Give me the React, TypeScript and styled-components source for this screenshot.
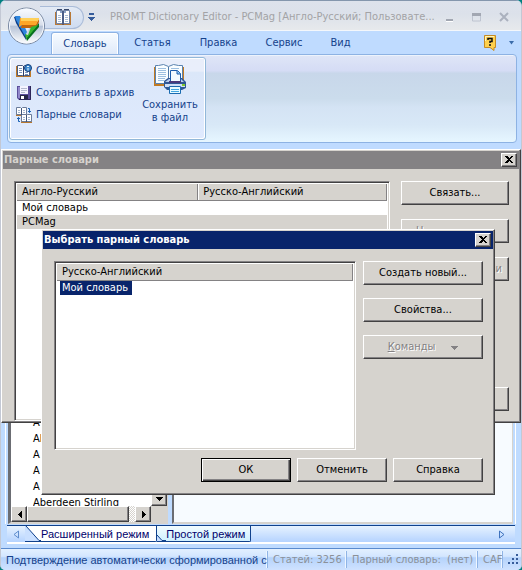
import React from "react";
import styled, { createGlobalStyle, css } from "styled-components";

const GlobalStyle = createGlobalStyle`
  * { box-sizing: border-box; }
  body { margin: 0; background: #008080; }
  body, button { font: 11px/14px "DejaVu Sans Condensed", "DejaVu Sans", sans-serif; }
  button { margin: 0; padding: 0; border: 0; background: none; color: inherit; }
  svg { display: block; flex: none; }
`;

const navy = "#15428b";
const face = "#d6d3ce";
const narrowFont = css`
  font-family: "Liberation Sans", Arial, sans-serif;
`;

const Shell = styled.div`
  position: relative;
  display: flex;
  flex-direction: column;
  min-height: 100vh;
  overflow: hidden;
  border: solid #c3c8d4;
  border-width: 0 1px;
  border-radius: 6px 6px 5px 5px;
  background: #bfdbff;
  color: ${navy};
`;

const TitleBar = styled.header`
  display: flex;
  align-items: center;
  height: 31px;
  padding: 3px 11px 0 39px;
  border-top: 1px solid #8496ad;
  border-bottom: 1px solid #f4f7fb;
  background: linear-gradient(#dde2ec, #dce1ea 45%, #e7e9ec);
`;

const Orb = styled.button`
  position: absolute;
  z-index: 1;
  left: 6px;
  top: 7px;
`;

const QuickBar = styled.div`
  display: flex;
  align-items: center;
  justify-content: flex-end;
  width: 44px;
  height: 23px;
  padding-right: 11px;
  border: 1px solid #a9bbd8;
  border-left: 0;
  border-radius: 0 12px 12px 0;
  background: linear-gradient(#e3eaf5, #cfdcf0);
`;

const More = styled.button`
  margin: 0 15px 0 4px;
`;

const WindowTitle = styled.h1`
  flex: 1;
  min-width: 0;
  margin: 0;
  overflow: hidden;
  white-space: nowrap;
  font: inherit;
  color: #a3a3a6;
`;

const Captions = styled.div`
  display: flex;
  gap: 17px;
`;

const TabRow = styled.nav`
  display: flex;
  align-items: flex-end;
  height: 23px;
  padding: 0 7px 0 50px;
`;

const RibbonTab = styled.button<{ $active?: boolean; $width: number }>`
  width: ${(p) => p.$width}px;
  height: 22px;
  color: ${navy};
  ${(p) =>
    p.$active &&
    css`
      border: 1px solid #8db2e3;
      border-bottom: 0;
      border-radius: 3px 3px 0 0;
      background: linear-gradient(#f7fbff, #dfeafa);
      box-shadow: inset 1px 1px #fff, inset -1px 0 #fff;
    `}
`;

const TabTools = styled.div`
  display: flex;
  align-items: center;
  gap: 12px;
  margin-left: auto;
  height: 23px;
`;

const Ribbon = styled.section`
  height: 89px;
  margin: 0 4px 0 6px;
  padding: 2px 1px;
  border: 1px solid #8db2e3;
  border-radius: 4px;
  background: linear-gradient(#dfe6f7, #d5dcf5 18%, #c8d7ea 21%, #cbdcec 50%, #d4e3f4 60%, #d8e8f7 80%, #e6f6ff);
  box-shadow: inset 1px 1px #edf3fc;
`;

const Group = styled.div`
  display: flex;
  width: 197px;
  height: 83px;
  padding: 2px 3px;
  border: 1px solid #92b8d9;
  border-radius: 3px;
  background: linear-gradient(#e9eefa, #e9eefb 16%, #dbe7f9 18%, #dfeafe);
  box-shadow: inset 1px 1px #fff, inset -1px -1px #fff;
`;

const CommandList = styled.div`
  display: flex;
  flex: 1;
  flex-direction: column;
`;

const Command = styled.button`
  display: flex;
  align-items: center;
  gap: 4px;
  height: 22px;
  padding-left: 3px;
  white-space: nowrap;
`;

const BigCommand = styled.button`
  display: flex;
  flex-direction: column;
  align-items: center;
  width: 64px;
  padding-top: 4px;
  gap: 1px;
  line-height: 13px;
`;

const Workspace = styled.main`
  display: grid;
  grid-template-columns: 160px 1fr;
  gap: 4px;
  flex: 1;
  min-height: 0;
  margin: 6px 5px 0 4px;
  padding: 0 2px;
  border: solid #fff;
  border-width: 0 1px;
`;

const EntryPane = styled.section`
  display: grid;
  grid-template-columns: 1fr 16px;
  grid-template-rows: 1fr 16px;
  border: solid;
  border-width: 0 1px 2px 3px;
  border-color: ${face} ${face} ${face} #6b6d73;
  background: ${face};
`;

const Entries = styled.ul`
  display: flex;
  flex-direction: column;
  justify-content: flex-end;
  margin: 0;
  padding: 0 0 0 22px;
  overflow: hidden;
  list-style: none;
  background: #fff;
  color: #000;
`;

const Entry = styled.li`
  height: 16px;
  line-height: 17px;
  white-space: nowrap;
  &:last-child { height: 12px; overflow: hidden; }
`;

const raised = css`
  border: 1px solid;
  border-color: #fff #424142 #424142 #fff;
  background: ${face};
  box-shadow: inset -1px -1px #848284;
`;

const VerticalBar = styled.div`
  display: flex;
  align-items: flex-end;
  background: #ebe9e6;
`;

const HorizontalBar = styled.div`
  display: flex;
  background: repeating-conic-gradient(#fff 0 25%, ${face} 0 50%) 0 0 / 2px 2px;
`;

const ScrollButton = styled.button`
  ${raised}
  display: grid;
  place-items: center;
  width: 16px;
  height: 16px;
`;

const Thumb = styled.div`
  ${raised}
  flex: 1;
  margin-right: 6px;
`;

const CardPane = styled.section`
  border: solid ${face};
  border-width: 0 1px 2px 2px;
  border-left-color: #6b6d73;
  background: #f7fbff;
`;

const ModeBar = styled.div`
  display: flex;
  align-items: flex-start;
  height: 19px;
  margin: 1px 6px 0;
  border-top: 1px solid #10418c;
  border-bottom: 2px solid #fff;
  background: linear-gradient(#e6f2ff, #b5d3ff);
`;

const ModeTab = styled.button<{ $active?: boolean }>`
  display: flex;
  height: 16px;
  padding-right: ${(p) => (p.$active ? 7 : 5)}px;
  border: solid #10418c;
  border-width: 0 1px 1px 0;
  border-radius: 0 0 2px 0;
  background: ${(p) => (p.$active ? "#fff" : "linear-gradient(#f2fcff, #cfefff)")};
  ${narrowFont}
  line-height: 17px;
  color: #00006b;
  white-space: nowrap;
`;

const ModeArrow = styled.button<{ $end?: boolean }>`
  display: grid;
  place-items: center;
  width: 18px;
  height: 16px;
  margin-left: ${(p) => (p.$end ? "auto" : "0")};
  margin-right: ${(p) => (p.$end ? "4px" : "0")};
`;

const Status = styled.footer`
  display: flex;
  align-items: center;
  height: 22px;
  margin-top: 4px;
  padding: 0 2px 1px 0;
  border-top: 1px solid #5a8ace;
  background: linear-gradient(#e3f0ff, #d3e6ff 35%, #b5d3fb 42%, #cfe2ff);
  white-space: nowrap;
`;

const StatusCell = styled.div<{ $width?: number; $muted?: boolean }>`
  flex: ${(p) => (p.$width ? "none" : "1")};
  width: ${(p) => (p.$width ? `${p.$width}px` : "auto")};
  min-width: 0;
  height: 17px;
  padding-left: 5px;
  overflow: hidden;
  ${(p) => !p.$muted && narrowFont}
  line-height: 18px;
  white-space: pre;
  color: ${(p) => (p.$muted ? "#8b9199" : navy)};
  border-right: 1px solid #8fb4e6;
  box-shadow: inset -1px 0 #eef6ff;
`;

const Dialog = styled.section<{ $front?: boolean }>`
  ${raised}
  position: absolute;
  top: ${(p) => (p.$front ? 229 : 149)}px;
  left: ${(p) => (p.$front ? 40 : 0)}px;
  right: ${(p) => (p.$front ? 26 : 0)}px;
  display: flex;
  flex-direction: column;
  height: ${(p) => (p.$front ? 266 : 274)}px;
  padding: 1px;
  color: #000;
`;

const Caption = styled.header<{ $active?: boolean }>`
  display: flex;
  align-items: center;
  justify-content: space-between;
  height: 18px;
  padding: 0 2px 0 1px;
  background: ${(p) => (p.$active ? "#08246b" : "#848284")};
  color: ${(p) => (p.$active ? "#fff" : face)};
`;

const CaptionText = styled.h2`
  margin: 0;
  font: inherit;
  font-weight: bold;
`;

const CloseButton = styled.button`
  ${raised}
  display: grid;
  place-items: center;
  width: 16px;
  height: 14px;
`;

const DialogBody = styled.div<{ $side: number; $gap: number }>`
  display: grid;
  grid-template-columns: 1fr ${(p) => p.$side}px;
  gap: ${(p) => p.$gap}px;
  flex: 1;
  padding: 12px 10px 0 11px;
`;

const Table = styled.table`
  width: 100%;
  border-collapse: separate;
  border-spacing: 0;
  table-layout: fixed;
`;

const TableFrame = styled.div`
  border: 1px solid;
  border-color: #848284 #fff #fff #848284;
  box-shadow: inset 1px 1px #424142, inset -1px -1px ${face};
  padding: 2px;
  background: #fff;
`;

const HeadCell = styled.th<{ $share?: number }>`
  width: ${(p) => (p.$share ? `${p.$share}%` : "auto")};
  height: 17px;
  padding: 0 0 0 5px;
  border: solid;
  border-width: 0 1px 1px 0;
  border-color: #848284;
  background: ${face};
  font-weight: normal;
  text-align: left;
  & + & { box-shadow: inset 1px 0 #fff; }
`;

const Cell = styled.td<{ $shade?: boolean }>`
  height: 14px;
  padding: 0 0 0 5px;
  background: ${(p) => (p.$shade ? face : "transparent")};
`;

const Selected = styled.span`
  display: inline-block;
  width: 72px;
  margin-left: -2px;
  padding-left: 2px;
  background: #08246b;
  color: #fff;
`;

const Buttons = styled.div<{ $gap: number }>`
  display: flex;
  flex-direction: column;
  gap: ${(p) => p.$gap}px;
`;

const PushButton = styled.button<{ $default?: boolean; $align?: "start" | "end" }>`
  ${raised}
  display: flex;
  align-items: center;
  justify-content: ${(p) => p.$align || "center"};
  gap: 16px;
  width: 100%;
  height: 24px;
  padding: 0 6px;
  padding-left: ${(p) => (p.$align === "start" ? 14 : 6)}px;
  ${(p) =>
    p.$default &&
    css`
      border-color: #000;
      box-shadow: inset 1px 1px #fff, inset -1px -1px #424142, inset -2px -2px #848284;
    `}
  &:disabled {
    color: #848284;
    text-shadow: 1px 1px #fff;
  }
`;

const Tail = styled.div`
  margin-top: auto;
  padding-bottom: 10px;
`;

const Footer = styled.footer`
  display: grid;
  grid-template-columns: repeat(3, 90px);
  justify-content: end;
  gap: 6px;
  padding: 8px 10px 11px;
`;

const BookIcon = () => (
  <svg width="17" height="17" viewBox="0 0 17 17">
    <path d="M0 3h16v13H0z" fill="#b87937" />
    <path d="M1.500 1.500h6v13h-6zM8.500 1.500h6v13h-6z" fill="#fff" stroke="#6f83a6" />
    <path d="M8 2v14" stroke="#26386b" />
    <path d="M2 .5h5M9 .5h5" stroke="#38486c" />
    <path d="M5 2h2v2H5zM9 2h2v2H9z" fill="#8ba3c6" />
    <path d="M3 6.500h3M10 6.500h3M3 8.500h3M10 8.500h3M3 10.500h3M10 10.500h3M3 12.500h3M10 12.500h3" stroke="#a9bdd6" />
  </svg>
);

const PropertiesIcon = () => (
  <svg width="16" height="16" viewBox="0 0 16 16">
    <path d="M0 3h15v11H0z" fill="#c07a28" />
    <path d="M1.500 2.500h5l1 1 1-1h5v10h-5l-1 1-1-1h-5z" fill="#fff" stroke="#4a5c80" />
    <path d="M7.500 3v10" stroke="#2c3e6b" />
    <path d="M3 5.500h3M3 7.500h3M3 9.500h3M9 9.500h3M9 11.500h3" stroke="#7b93bb" />
    <circle cx="12" cy="5" r="3.500" fill="#3f8ad0" stroke="#113c7a" />
    <path d="M11 3.500h2M12 5v2.500" stroke="#e9f7ff" />
  </svg>
);

const DiskIcon = () => (
  <svg width="16" height="16" viewBox="0 0 16 16">
    <path d="M1 1h14v14H3l-2-2z" fill="#5b4f9c" />
    <path d="M2 2h2v11H2z" fill="#9288cb" />
    <path d="M4 1h8v8H4z" fill="#f4f4ff" />
    <path d="M5 3.500h6M5 5.500h6M5 7.500h4" stroke="#b3bace" />
    <path d="M4 10h8v5H4z" fill="#252745" />
    <path d="M5 11h3v3H5z" fill="#fff" />
    <path d="M14.500 1v13.500H3" fill="none" stroke="#2c2658" />
  </svg>
);

const PairIcon = () => (
  <svg width="16" height="16" viewBox="0 0 16 16">
    <path d="M0 1h11v8H0zM5 8h11v8H5z" fill="#b7772d" />
    <path d="M.5 .5h4l1 1 1-1h4v7H.5zM5.500 7.500h4l1 1 1-1h4v7h-10z" fill="#fff" stroke="#6a7c9b" />
    <path d="M5.500 1v7M10.500 8v7" stroke="#40567b" />
    <path d="M2 3.500h2M7 3.500h2M2 5.500h2M7 5.500h2M7 10.500h2M12 10.500h2M7 12.500h2M12 12.500h2" stroke="#a3b6cf" />
    <path d="M12 1.500h1.500v4M12 4l1.500 1.500L15 4M4 14.500H2.500v-4M1 12l1.500-1.500L4 12" fill="none" stroke="#1c62b4" />
  </svg>
);

const SaveFileIcon = () => (
  <svg width="33" height="33" viewBox="0 0 33 33">
    <path d="M0 3h30v19H17l-2 2-2-2H0z" fill="#c27a22" />
    <path d="M1.500 1.500h3l5-1 5 2 5-2 5 1h4v18h-9l-5 2-4-2h-9z" fill="#f9fdff" stroke="#5b83ae" />
    <path d="M14.500 3v18" stroke="#4e78a8" />
    <path d="M4 4.500h8M4 6.500h8M4 8.500h8M4 10.500h8M4 12.500h8M4 14.500h7M4 16.500h6M17 4.500h8" stroke="#9dbfe0" />
    <path d="M10 17l4-3h14l4 4v6l-4 2H13l-3-3z" fill="#2f5795" />
    <path d="M11 18l4-3h12l3 3z" fill="#b9cdee" />
    <path d="M16.500 6.500h7l3 3v8h-10z" fill="#f2fbff" stroke="#1b5cab" />
    <path d="M23 7v3h4" fill="#8cc9f5" stroke="#1b5cab" />
    <path d="M15 17h12v2H15z" fill="#48397a" />
    <path d="M11 20h20v3H11z" fill="#cfdff7" />
    <path d="M15.500 22.500h11v7h-11z" fill="#e7fbff" stroke="#1b6bb0" />
    <path d="M17 25.500h8M17 27.500h8" stroke="#43a4df" />
    <path d="M28 20h3v2h-3z" fill="#7fc82e" />
  </svg>
);

const Triangle = ({ dir = "down", color = "#000" }: { dir?: string; color?: string }) => {
  const shapes: Record<string, string> = {
    down: "M0 2h7L3.500 6z",
    left: "M6 0v7L2 3.500z",
    right: "M2 0v7L6 3.500z",
  };
  return (
    <svg width="7" height="7" viewBox="0 0 7 7" shapeRendering="crispEdges">
      <path d={shapes[dir]} fill={color} />
    </svg>
  );
};

const CloseGlyph = () => (
  <svg width="10" height="8" viewBox="0 0 10 8" shapeRendering="crispEdges">
    <path d="M1 0h2l2 2 2-2h2L6 3.500 9 7H7L5 5 3 7H1l3-3.500z" fill="#000" />
  </svg>
);

function DialogCaption({ text, active }: { text: string; active?: boolean }) {
  return (
    <Caption $active={active}>
      <CaptionText>{text}</CaptionText>
      <CloseButton aria-label="Закрыть"><CloseGlyph /></CloseButton>
    </Caption>
  );
}

const tabs = [
  { text: "Словарь", width: 68 },
  { text: "Статья", width: 67 },
  { text: "Правка", width: 65 },
  { text: "Сервис", width: 66 },
  { text: "Вид", width: 47 },
];

export default function App() {
  return (
    <>
      <GlobalStyle />
      <Shell>
        <Orb aria-label="PROMT">
          <svg width="40" height="40" viewBox="0 0 40 40">
            <defs>
              <linearGradient id="orb" x2="0" y2="1">
                <stop stopColor="#fafcff" />
                <stop offset=".48" stopColor="#d7deea" />
                <stop offset=".5" stopColor="#b4c1d6" />
                <stop offset="1" stopColor="#fff" />
              </linearGradient>
            </defs>
            <circle cx="19.500" cy="19" r="18" fill="url(#orb)" stroke="#7787a0" />
            <circle cx="19.500" cy="19" r="17" fill="none" stroke="#f4f8ff" />
            <path d="M15 18h9l-5 9z" fill="#e3ebf5" />
            <path d="M7 10l2 6 10 17v-6L12 9z" fill="#0d3c86" />
            <path d="M8 9h5l7 16-2 4L9 13z" fill="#2f86dd" />
            <path d="M15 17h14l3-5v3l-3 6H14z" fill="#c4650c" />
            <path d="M13 11h19l-3 7H15l-3 2z" fill="#ffa628" />
            <path d="M14 11h18l-1 3H14z" fill="#ffd15a" />
            <path d="M32 16v4L20 34l-1-3z" fill="#08701f" />
            <path d="M24 20l7-2-12 14-1-5 3 1z" fill="#35b52f" />
          </svg>
        </Orb>
        <TitleBar>
          <QuickBar><button aria-label="Словарь"><BookIcon /></button></QuickBar>
          <More aria-label="Настройка панели">
            <svg width="7" height="8" viewBox="0 0 7 8" shapeRendering="crispEdges">
              <path d="M1 1h5" stroke="#365c9b" strokeWidth="2" />
              <path d="M0 4h7L3.500 8z" fill="#365c9b" />
            </svg>
          </More>
          <WindowTitle>PROMT Dictionary Editor - PCMag [Англо-Русский; Пользовате...</WindowTitle>
          <Captions>
            <button aria-label="Свернуть">
              <svg width="10" height="9"><path d="M1 7h7" stroke="#a2a7b2" strokeWidth="2" /><path d="M1 8.500h7" stroke="#fff" /></svg>
            </button>
            <button aria-label="Развернуть">
              <svg width="10" height="9"><path d="M.5 1v7h8V1" fill="none" stroke="#bec4d0" /><path d="M0 1.500h9" stroke="#a2a7b2" strokeWidth="3" /></svg>
            </button>
            <button aria-label="Закрыть окно">
              <svg width="11" height="10"><path d="M1 1l8 8M9 1L1 9" stroke="#abb1be" strokeWidth="2" /></svg>
            </button>
          </Captions>
        </TitleBar>
        <TabRow>
          {tabs.map((t, i) => (
            <RibbonTab key={t.text} $active={i === 0} $width={t.width}>{t.text}</RibbonTab>
          ))}
          <TabTools>
            <button aria-label="Справка">
              <svg width="13" height="16" viewBox="0 0 13 16">
                <path d="M.5 .5h11v12H10v3l-4-3H.5z" fill="#ffd14d" stroke="#c58b25" />
                <path d="M1.500 6V1.500H10" fill="none" stroke="#fff4bd" />
                <path d="M4 5V3.500h4v3H6V8M6 9v2" fill="none" stroke="#111" strokeWidth="1.500" />
              </svg>
            </button>
            <button aria-label="Меню">
              <svg width="5" height="4" viewBox="0 0 5 4"><path d="M0 0h5L2.500 3.500z" fill="#3b6caa" /></svg>
            </button>
          </TabTools>
        </TabRow>
        <Ribbon>
          <Group>
            <CommandList>
              <Command><PropertiesIcon />Свойства</Command>
              <Command><DiskIcon />Сохранить в архив</Command>
              <Command><PairIcon />Парные словари</Command>
            </CommandList>
            <BigCommand><SaveFileIcon /><span>Сохранить<br />в файл</span></BigCommand>
          </Group>
        </Ribbon>
        <Workspace>
          <EntryPane>
            <Entries>
              {["A", "Ab", "A", "A", "A", "Aberdeen Stirling"].map((e, i) => <Entry key={i}>{e}</Entry>)}
            </Entries>
            <VerticalBar><ScrollButton aria-label="Вниз"><Triangle /></ScrollButton></VerticalBar>
            <HorizontalBar>
              <ScrollButton aria-label="Влево"><Triangle dir="left" /></ScrollButton>
              <Thumb />
              <ScrollButton aria-label="Вправо"><Triangle dir="right" /></ScrollButton>
            </HorizontalBar>
          </EntryPane>
          <CardPane />
        </Workspace>
        <ModeBar>
          <ModeArrow aria-label="Назад">
            <svg width="6" height="9"><path d="M5.500 1v7L1 4.500z" fill="none" stroke="#5f8dcd" /></svg>
          </ModeArrow>
          <ModeTab $active>
            <svg width="16" height="15" viewBox="0 0 16 15">
              <path d="M0 0v15h15L1 0z" fill="#c9dfff" />
              <path d="M1 0l13 14.500h2" fill="none" stroke="#10418c" />
            </svg>
            Расширенный режим
          </ModeTab>
          <ModeTab>
            <svg width="9" height="15" viewBox="0 0 9 15">
              <path d="M0 9v6h6z" fill="#c9dfff" />
              <path d="M0 9l5 5.500h4" fill="none" stroke="#10418c" />
            </svg>
            Простой режим
          </ModeTab>
          <ModeArrow $end aria-label="Вперёд">
            <svg width="6" height="9"><path d="M.5 1v7L5 4.500z" fill="none" stroke="#3f72bd" /></svg>
          </ModeArrow>
        </ModeBar>
        <Status>
          <StatusCell>Подтверждение автоматически сформированной ст</StatusCell>
          <StatusCell $width={79} $muted>Статей: 3256</StatusCell>
          <StatusCell $width={131} $muted>Парный словарь:  (нет)</StatusCell>
          <StatusCell $width={25} $muted>CAF</StatusCell>
          <svg width="16" height="12" viewBox="0 0 16 12" shapeRendering="crispEdges">
            <path d="M13 1h2v2h-2zM9 5h2v2H9zM13 5h2v2h-2zM5 9h2v2H5zM9 9h2v2H9zM13 9h2v2h-2z" fill="#365c9b" />
          </svg>
        </Status>

        <Dialog role="dialog" aria-label="Парные словари">
          <DialogCaption text="Парные словари" />
          <DialogBody $side={108} $gap={11}>
            <TableFrame>
              <Table>
                <thead><tr><HeadCell $share={49}>Англо-Русский</HeadCell><HeadCell>Русско-Английский</HeadCell></tr></thead>
                <tbody>
                  <tr><Cell colSpan={2}>Мой словарь</Cell></tr>
                  <tr><Cell colSpan={2} $shade>PCMag</Cell></tr>
                </tbody>
              </Table>
            </TableFrame>
            <Buttons $gap={14}>
              <PushButton>Связать...</PushButton>
              <PushButton disabled $align="start">Н</PushButton>
              <PushButton disabled $align="end">и</PushButton>
              <Tail><PushButton aria-label="Справка" /></Tail>
            </Buttons>
          </DialogBody>
        </Dialog>

        <Dialog $front role="dialog" aria-label="Выбрать парный словарь">
          <DialogCaption active text="Выбрать парный словарь" />
          <DialogBody $side={120} $gap={7}>
            <TableFrame>
              <Table>
                <thead><tr><HeadCell>Русско-Английский</HeadCell></tr></thead>
                <tbody><tr><Cell><Selected>Мой словарь</Selected></Cell></tr></tbody>
              </Table>
            </TableFrame>
            <Buttons $gap={13}>
              <PushButton>Создать новый...</PushButton>
              <PushButton>Свойства...</PushButton>
              <PushButton disabled><span><u>К</u>оманды</span><Triangle color="#848284" /></PushButton>
            </Buttons>
          </DialogBody>
          <Footer>
            <PushButton $default>ОК</PushButton>
            <PushButton>Отменить</PushButton>
            <PushButton>Справка</PushButton>
          </Footer>
        </Dialog>
      </Shell>
    </>
  );
}
